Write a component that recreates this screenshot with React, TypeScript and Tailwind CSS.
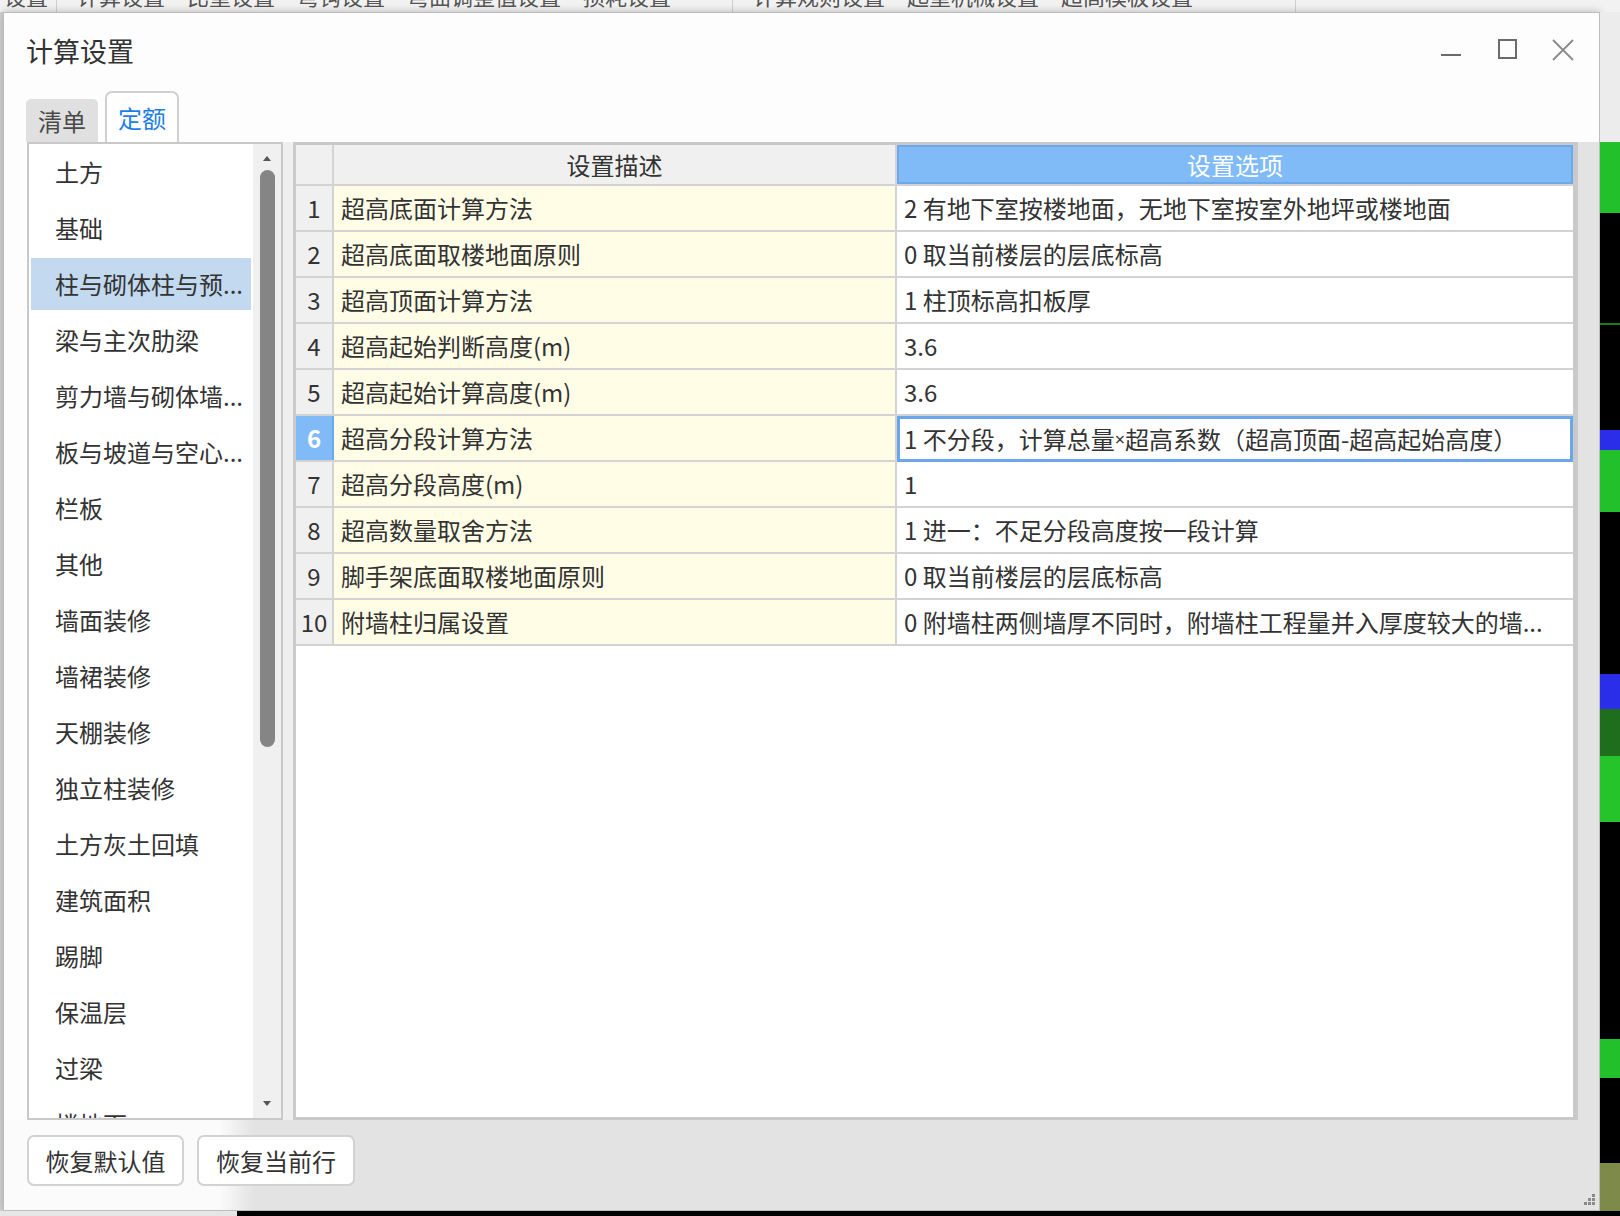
import React from 'react';

const categories = [
  '土方',
  '基础',
  '柱与砌体柱与预...',
  '梁与主次肋梁',
  '剪力墙与砌体墙...',
  '板与坡道与空心...',
  '栏板',
  '其他',
  '墙面装修',
  '墙裙装修',
  '天棚装修',
  '独立柱装修',
  '土方灰土回填',
  '建筑面积',
  '踢脚',
  '保温层',
  '过梁',
  '楼地面',
];

const rows: { no: number; desc: string; value: React.ReactNode }[] = [
  { no: 1, desc: '超高底面计算方法', value: '2 有地下室按楼地面，无地下室按室外地坪或楼地面' },
  { no: 2, desc: '超高底面取楼地面原则', value: '0 取当前楼层的层底标高' },
  { no: 3, desc: '超高顶面计算方法', value: '1 柱顶标高扣板厚' },
  { no: 4, desc: '超高起始判断高度(m)', value: '3.6' },
  { no: 5, desc: '超高起始计算高度(m)', value: '3.6' },
  {
    no: 6,
    desc: '超高分段计算方法',
    value: (
      <>
        1 不分段，计算总量<span className="font-['Noto_Sans',sans-serif] text-[18px]">×</span>超高系数（超高顶面-超高起始高度）
      </>
    ),
  },
  { no: 7, desc: '超高分段高度(m)', value: '1' },
  { no: 8, desc: '超高数量取舍方法', value: '1 进一：不足分段高度按一段计算' },
  { no: 9, desc: '脚手架底面取楼地面原则', value: '0 取当前楼层的层底标高' },
  { no: 10, desc: '附墙柱归属设置', value: '0 附墙柱两侧墙厚不同时，附墙柱工程量并入厚度较大的墙...' },
];

// 3D viewport peeking out on the right
const viewport = [
  { h: 130, c: 'bg-[#ececec]' },
  { h: 71, c: 'bg-[#22c02b]' },
  { h: 110, c: 'bg-black' },
  { h: 2, c: 'bg-[#1d7a1d]' },
  { h: 105, c: 'bg-black' },
  { h: 20, c: 'bg-[#2a2ee8]' },
  { h: 62, c: 'bg-[#22c02b]' },
  { h: 162, c: 'bg-black' },
  { h: 35, c: 'bg-[#2a2ee8]' },
  { h: 47, c: 'bg-[#1e6e1e]' },
  { h: 66, c: 'bg-[#25c42b]' },
  { h: 217, c: 'bg-black' },
  { h: 39, c: 'bg-[#22c02b]' },
  { h: 85, c: 'bg-black' },
  { h: 48, c: 'bg-[#7d8a4a]' },
];

export default function App() {
  const selectedCategory = 2;
  const selectedRow = 6;

  return (
    <div className="w-[1620px] h-[1216px] overflow-hidden flex flex-col bg-[#e8e8e8] font-['Noto_Sans_CJK_SC','Noto_Sans',sans-serif] text-[#333]">
      {/* app toolbar behind the dialog */}
      <div className="h-[12px] shrink-0 overflow-hidden bg-[#f2f2f2] flex text-[22px] leading-[30px] text-[#555] whitespace-nowrap">
        <div className="w-[57px] -mt-[20px] pl-[4px] border-r border-[#cfcfcf] overflow-hidden">设置</div>
        <div className="w-[676px] -mt-[20px] pl-[20px] flex gap-[22px] border-r border-[#cfcfcf]">
          <span>计算设置</span>
          <span>比重设置</span>
          <span>弯钩设置</span>
          <span>弯曲调整值设置</span>
          <span>损耗设置</span>
        </div>
        <div className="w-[563px] -mt-[20px] pl-[20px] flex gap-[22px] border-r border-[#cfcfcf]">
          <span>计算规则设置</span>
          <span>起重机械设置</span>
          <span>超高模板设置</span>
        </div>
        <div className="flex-1" />
      </div>

      <div className="flex h-[1199px] shrink-0">
        <div className="w-[3px] bg-[#d6d6d6]" />

        {/* dialog */}
        <div className="w-[1597px] h-[1199px] border border-[#bdbdbd] bg-[#fdfdfd] flex flex-col shadow-[0_0_8px_rgba(0,0,0,0.25)]">
          {/* title bar */}
          <div className="h-[78px] shrink-0 flex items-start pt-[24px] pl-[22px] pr-[25px]">
            <div className="text-[27px] leading-[28px] text-[#333]">计算设置</div>
            <div className="ml-auto h-[28px] flex items-center">
              <div className="w-[20px] h-[2px] bg-[#6b6b6b] mt-[7px]" />
              <div className="ml-[37px] w-[19px] h-[20px] border-2 border-[#6b6b6b] -mt-[4px]" />
              <svg className="ml-[35px] -mt-[3px]" width="22" height="22" viewBox="0 0 22 22">
                <path d="M1 1 L21 21 M21 1 L1 21" stroke="#8a8a8a" strokeWidth="1.8" fill="none" />
              </svg>
            </div>
          </div>

          {/* tabs */}
          <div className="h-[51px] shrink-0 flex items-end pl-[22px] gap-[7px] text-[24px]">
            <div className="w-[72px] h-[43px] bg-[#e0e0e0] rounded-t-[5px] flex items-center justify-center text-[#4a4a4a]">清单</div>
            <div className="w-[74px] h-[51px] bg-white border-2 border-b-0 border-[#d0d0d0] rounded-t-[7px] flex items-center justify-center text-[#1c7ee6]">定额</div>
          </div>

          {/* content */}
          <div className="h-[978px] shrink-0 flex">
            <div className="w-[23px]" />

            {/* category list */}
            <div className="w-[256px] border-2 border-[#c9c9c9] bg-white flex">
              <div className="w-[224px] overflow-hidden pt-[2px]">
                {categories.map((name, i) => (
                  <div key={name} className="h-[56px] pb-[4px] pl-[2px] pr-[2px]">
                    <div
                      className={`h-[52px] pl-[24px] flex items-center text-[24px] whitespace-nowrap overflow-hidden ${
                        i === selectedCategory ? 'bg-[#c2d9f0]' : ''
                      }`}
                    >
                      {name}
                    </div>
                  </div>
                ))}
              </div>
              <div className="w-[28px] bg-[#f0f0f0] flex flex-col items-center pt-[12px] pb-[12px]">
                <div className="w-0 h-0 border-l-[4px] border-r-[4px] border-b-[5px] border-l-transparent border-r-transparent border-b-[#555]" />
                <div className="mt-[9px] w-[15px] h-[577px] rounded-full bg-[#858585]" />
                <div className="mt-auto w-0 h-0 border-l-[4px] border-r-[4px] border-t-[5px] border-l-transparent border-r-transparent border-t-[#555]" />
              </div>
            </div>

            <div className="w-[10px] bg-[#efefef]" />

            {/* settings grid */}
            <div className="w-[1285px] border-[3px] border-r-[5px] border-[#c8c9cb] bg-white flex flex-col text-[24px]">
              <div className="h-[41px] shrink-0 flex border-b-2 border-[#d3d3d3]">
                <div className="w-[38px] bg-[#f0f0f0] border-r-2 border-[#d3d3d3]" />
                <div className="w-[563px] bg-[#f0f0f0] border-r-2 border-[#d3d3d3] flex items-center justify-center">设置描述</div>
                <div className="w-[676px] bg-[#80bbf7] border-2 border-[#6ea8ec] flex items-center justify-center text-white">设置选项</div>
              </div>
              {rows.map((row) => {
                const active = row.no === selectedRow;
                return (
                  <div key={row.no} className="h-[46px] shrink-0 flex border-b-2 border-[#d3d3d3]">
                    <div
                      className={`w-[38px] border-r-2 flex items-center justify-center ${
                        active ? 'bg-[#80bbf7] border-[#6ea8ec] text-white font-bold' : 'bg-[#f0f0f0] border-[#d3d3d3]'
                      }`}
                    >
                      {row.no}
                    </div>
                    <div className="w-[563px] bg-[#fffde6] border-r-2 border-[#d3d3d3] pl-[7px] flex items-center whitespace-nowrap">
                      {row.desc}
                    </div>
                    <div
                      className={`w-[676px] flex items-center whitespace-nowrap overflow-hidden ${
                        active ? 'border-[3px] border-[#6aa6ea] pl-[4px] -mb-[2px]' : 'pl-[7px]'
                      }`}
                    >
                      {row.value}
                    </div>
                  </div>
                );
              })}
              <div className="flex-1" />
            </div>

            <div className="w-[21px] bg-[#e3e3e3]" />
          </div>

          {/* buttons */}
          <div className="h-[90px] shrink-0 flex items-start pt-[15px] pl-[23px] pr-[3px] bg-[linear-gradient(to_right,#fbfbfb_0px,#fbfbfb_215px,#e3e3e3_250px,#e3e3e3_100%)]">
            <button className="w-[157px] h-[51px] bg-white border-2 border-[#d2d2d2] rounded-[7px] text-[24px] text-[#333]">恢复默认值</button>
            <button className="ml-[13px] w-[158px] h-[51px] bg-white border-2 border-[#d2d2d2] rounded-[7px] text-[24px] text-[#333]">恢复当前行</button>
            <svg className="ml-auto self-end mb-[4px]" width="14" height="14" viewBox="0 0 14 14">
              <rect x="10" y="2" width="3" height="3" fill="#8a8a8a" />
              <rect x="6" y="6" width="3" height="3" fill="#8a8a8a" />
              <rect x="10" y="6" width="3" height="3" fill="#8a8a8a" />
              <rect x="2" y="10" width="3" height="3" fill="#8a8a8a" />
              <rect x="6" y="10" width="3" height="3" fill="#8a8a8a" />
              <rect x="10" y="10" width="3" height="3" fill="#8a8a8a" />
            </svg>
          </div>
        </div>

        {/* viewport on the right */}
        <div className="w-[20px] flex flex-col">
          {viewport.map((band, i) => (
            <div key={i} className={`shrink-0 ${band.c}`} style={{ height: band.h }} />
          ))}
        </div>
      </div>

      <div className="h-[5px] shrink-0 flex">
        <div className="w-[237px] bg-[#e6e6e6]" />
        <div className="flex-1 bg-black" />
      </div>
    </div>
  );
}
